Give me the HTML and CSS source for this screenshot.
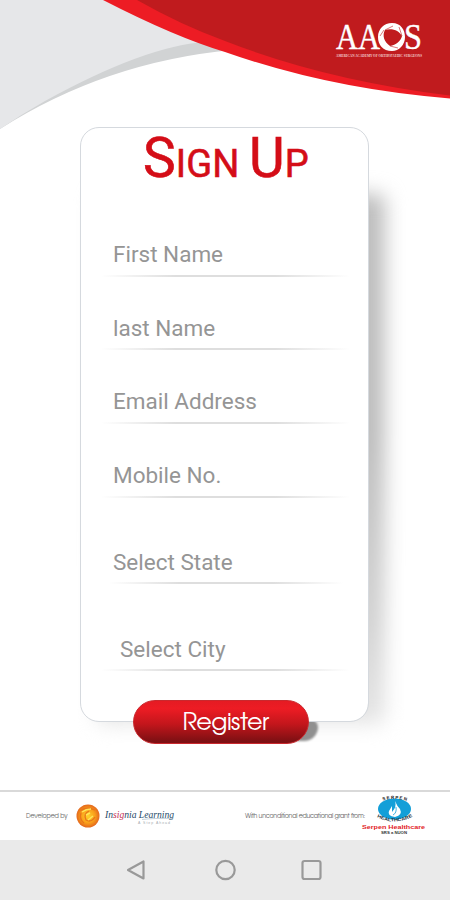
FILE: index.html
```html
<!DOCTYPE html>
<html lang="en">
<head>
<meta charset="utf-8">
<title>Sign Up</title>
<link rel="stylesheet" href="styles.css">
</head>
<body>
<div class="screen">
  <main class="main">
    <svg class="waves" viewBox="0 0 450 140" aria-hidden="true">
      <path fill="#d1d3d4" d="M0 129Q105 62 232 50L200 30L0 90Z"/>
      <path fill="#e6e7e9" d="M0 0H110L205 42Q145 46 45 101Q22 114 0 129Z"/>
      <path fill="#ed1c24" d="M103 0Q175 37 225 52Q330 89 450 98.500V0Z"/>
      <path fill="#c01b1e" d="M137 0Q181 25 225 41Q325 80 450 95.500V0Z"/>
    </svg>
    <svg class="aaos" viewBox="0 0 90 40" role="img" aria-label="AAOS">
      <g fill="#fff" font-family="Liberation Serif, serif">
        <text x="1" y="28" font-size="36" textLength="44" lengthAdjust="spacingAndGlyphs" stroke="#fff" stroke-width=".4">AA</text>
        <text x="69" y="28" font-size="36" textLength="18" lengthAdjust="spacingAndGlyphs" stroke="#fff" stroke-width=".4">S</text>
        <text x="1" y="35.500" font-size="3.500" font-weight="bold" textLength="86" lengthAdjust="spacingAndGlyphs" fill="#f3cfcf">AMERICAN ACADEMY OF ORTHOPAEDIC SURGEONS</text>
      </g>
      <path fill="#fff" fill-rule="evenodd" d="M57 2C66 2 70 9 70 16C70 24 64 30 57 30C48 30 43 24 43 16C43 8 49 2 57 2ZM50 9C47 14 49 21 55 25C61 24 66 20 67 15C64 10 58 7 50 9Z"/>
      <path fill="none" stroke="#c01b1e" stroke-width=".6" d="M49 9L45 15M55 25L63 27M67 15L64 6M50 9L58 5"/>
    </svg>
    <form class="card">
      <h1 class="title"><span class="cap">S</span>IGN <span class="cap">U</span>P</h1>
      <div class="field">First Name</div>
      <div class="field">last Name</div>
      <div class="field">Email Address</div>
      <div class="field">Mobile No.</div>
      <div class="field tall state">Select State</div>
      <div class="field tall city">Select City</div>
      <button class="register" type="button">Register</button>
    </form>
  </main>
  <footer class="credits">
    <span class="dev">Developed by</span>
    <svg class="orb" viewBox="0 0 24 24" aria-hidden="true">
      <defs><radialGradient id="sun"><stop offset="0" stop-color="#ffd22b"/><stop offset=".6" stop-color="#f9a01b"/><stop offset="1" stop-color="#e4681c"/></radialGradient></defs>
      <circle cx="12" cy="12" r="11.500" fill="url(#sun)"/>
      <path d="M4 7Q10 2 19 6M5 9Q3 15 8 19M13 7Q7 10 10 16Q15 19 19 13" fill="none" stroke="#e8751a" stroke-width="1.300"/>
      <path d="M6 8Q10 5 15 5M10 11L14 9M12 16L17 12" fill="none" stroke="#ffe45a" stroke-width="1.500"/>
    </svg>
    <svg class="insignia" viewBox="0 0 72 20" role="img" aria-label="Insignia Learning">
      <text x="1" y="12" font-family="Liberation Serif, serif" font-style="italic" font-size="10.500" textLength="69" lengthAdjust="spacingAndGlyphs" fill="#254a68">In<tspan fill="#c52b50">sig</tspan>nia Learning</text>
      <path d="M38 13.500Q50 12 69 12.500" fill="none" stroke="#9db3c2" stroke-width=".6"/>
      <text x="34" y="17.500" font-family="Liberation Sans, sans-serif" font-size="3.500" textLength="32" fill="#a5abb0">A Step Ahead</text>
    </svg>
    <span class="grant">With unconditional educational grant from:</span>
    <svg class="sponsor" viewBox="0 0 66 42" role="img" aria-label="Serpen Healthcare">
      <defs><path id="top" d="M19 6.500Q33 1.500 48 6.500"/><path id="bottom" d="M16 22Q33 31 51 22"/></defs>
      <ellipse cx="33.500" cy="14" rx="16.500" ry="10.500" fill="#139fd8"/>
      <g font-family="Liberation Sans, sans-serif" font-weight="bold">
        <text font-size="4.500" fill="#222"><textPath href="#top" startOffset="3" textLength="24">SERPEN</textPath></text>
        <text font-size="4.500" fill="#24313b"><textPath href="#bottom" textLength="37" lengthAdjust="spacingAndGlyphs">HEALTHCARE</textPath></text>
        <text x="1" y="33.500" font-size="5.500" textLength="63" lengthAdjust="spacingAndGlyphs" fill="#e21b26">Serpen Healthcare</text>
        <text x="20" y="39" font-size="4" textLength="26" lengthAdjust="spacingAndGlyphs" fill="#333">SRS a NUON</text>
      </g>
      <path fill="#fff" d="M34 6Q36 11 39 14Q42 20 34 22Q26 21 28 16L31 11L31 17Q36 12 34 6Z"/>
      <path fill="none" stroke="#139fd8" stroke-width=".8" d="M32 20Q36 18 35 12"/>
    </svg>
  </footer>
  <nav class="navbar">
    <svg viewBox="0 0 24 24"><path d="M16.500 3.500V20.500L1 12Z"/></svg>
    <svg viewBox="0 0 24 24"><circle cx="12.500" cy="12" r="9.200"/></svg>
    <svg viewBox="0 0 24 24"><rect x="3.500" y="3" width="18" height="18" rx="2"/></svg>
  </nav>
</div>
</body>
</html>
```
FILE: styles.css
```css
* { box-sizing: border-box; }
body { margin: 0; background: #fff; font-family: Roboto, sans-serif; }
.screen { display: flex; flex-direction: column; width: 450px; height: 900px; overflow: hidden; }
.main { position: relative; z-index: 0; flex: none; height: 790px; padding: 127px 81px 0 80px; }
.waves { position: absolute; left: 0; top: 0; width: 450px; height: 140px; }
.aaos { position: absolute; left: 335px; top: 21px; width: 90px; height: 40px; overflow: visible; }
.card {
  position: relative; display: flex; flex-direction: column;
  height: 595px; padding: 0 18px 0 20px;
  border: 1px solid #d5d9de; border-radius: 19px;
}
.card::before {
  content: ""; position: absolute; z-index: -1; left: 16px; top: 66px; right: -17px; bottom: -3px;
  border-radius: 8px; background: linear-gradient(#bdbdbd 0, #bdbdbd 45%, #d2d2d2 80%, #e6e6e6 100%);
  filter: blur(10px);
}
.card::after {
  content: ""; position: absolute; z-index: -1; inset: 0; background: #fff; border-radius: 18px;
}
.title {
  flex: none; height: 75px; margin: 0; padding-left: 42px; line-height: 60px;
  font-size: 38px; font-weight: 400; color: #d40d17; white-space: nowrap;
  letter-spacing: .1px; -webkit-text-stroke: .6px #d40d17;
}
.cap { font-size: 55px; }
.field {
  flex: none; height: 73.700px; padding: 37px 0 0 12px; font-size: 22.500px; line-height: 28px;
  color: #959595; white-space: nowrap;
  background: linear-gradient(90deg, transparent, #dedede 30%, #dedede 70%, transparent) left bottom / 100% 2px no-repeat;
}
.tall { height: 86.500px; padding-top: 50.500px; }
.state { background-size: 94% 2px; background-position: 8px bottom; }
.city { padding-left: 19px; }
.register {
  position: relative; align-self: flex-start; flex: none; width: 176px; height: 44px;
  margin: 29.500px 0 0 32px; padding: 2px 0 0 9px;
  border: 1px solid #c9292e; border-radius: 22px; color: #fff;
  background: linear-gradient(#e51b23 0, #ed1c24 18%, #c3161c 55%, #7f1013 95%);
  font: 24px "TeX Gyre Adventor", Lato, sans-serif; letter-spacing: -.6px;
}
.register::before {
  content: ""; position: absolute; z-index: -1; right: -10px; top: 19px; width: 50px; height: 21px;
  border-radius: 10px 10px 20px 10px; background: #909090; filter: blur(1px);
}
.credits {
  display: flex; align-items: center; flex: none; height: 50px; padding-left: 26px;
  border-top: 2px solid #d9d9d9; background: #fff; color: #666;
  font: 6.300px "TeX Gyre Adventor", Lato, sans-serif; letter-spacing: -.15px; white-space: nowrap;
}
.dev { width: 50px; }
.orb { width: 24px; height: 24px; }
.insignia { width: 72px; height: 20px; margin-left: 4px; overflow: visible; letter-spacing: 0; }
.grant { width: 120px; margin-left: 69px; letter-spacing: -.28px; }
.sponsor { width: 66px; height: 42px; margin-left: -4px; letter-spacing: 0; }
.navbar { display: flex; align-items: center; justify-content: center; gap: 62px; height: 60px; background: #eaeaea; }
.navbar svg { width: 24px; height: 24px; fill: none; stroke: #999; stroke-width: 2.200; stroke-linejoin: round; }
```
